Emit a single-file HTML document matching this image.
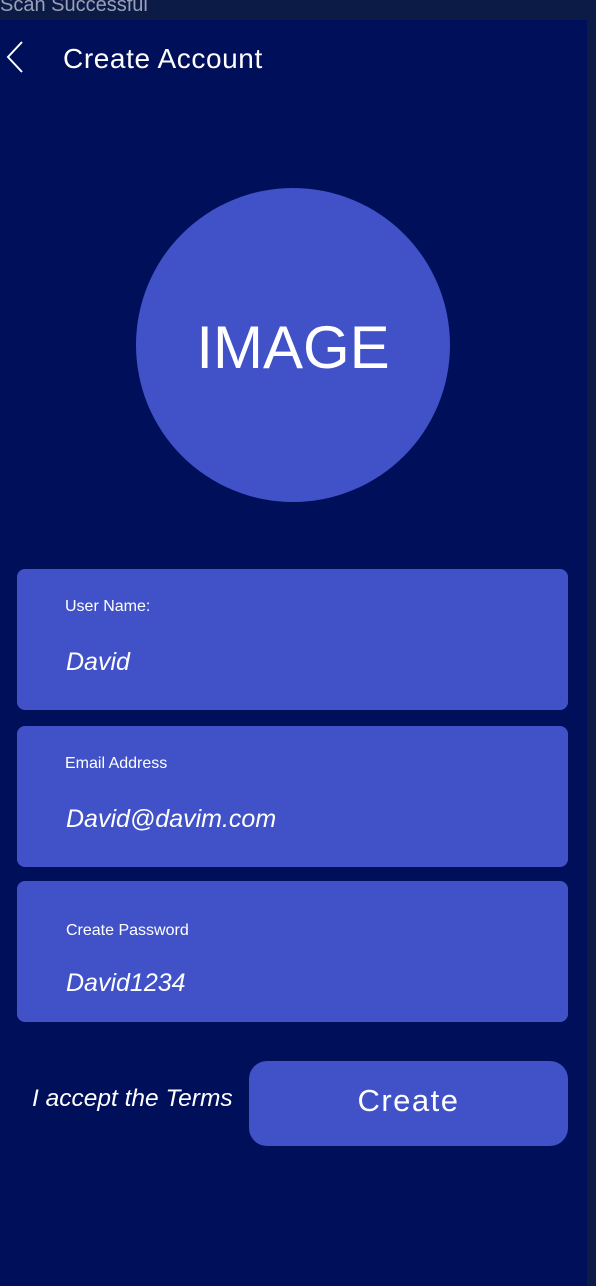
<!DOCTYPE html>
<html><head><meta charset="utf-8"><style>
html,body{margin:0;padding:0}
body{width:596px;height:1286px;background:#0c1a46;position:relative;overflow:hidden;font-family:"Liberation Sans",sans-serif;color:#fff}
.top{position:absolute;left:0;top:0;width:596px;height:20px;background:#0c1a46}
.top span{position:absolute;left:0;top:-6px;font-size:20px;color:#9aa0b8}
.main{position:absolute;left:0;top:20px;width:587px;height:1266px;background:#000f5a}
.title{position:absolute;left:63px;top:43px;font-size:28px;letter-spacing:0.6px}
.circle{position:absolute;left:136px;top:188px;width:314px;height:314px;border-radius:50%;background:#4152c8}
.circle span{position:absolute;left:0;right:0;top:120px;text-align:center;font-size:60px;line-height:80px;letter-spacing:0px}
.card{position:absolute;left:17px;width:551px;height:141px;background:#4152c8;border-radius:8px}
.lbl{position:absolute;left:48px;font-size:16px}
.val{position:absolute;left:49px;font-size:25px;font-style:italic}
.terms{position:absolute;left:32px;top:1085px;font-size:24.5px;font-style:italic}
.btn{position:absolute;left:249px;top:1061px;width:319px;height:85px;background:#4152c8;border-radius:18px;text-align:center;font-size:31px;line-height:80px;letter-spacing:1.5px}
</style></head><body>
<div class="top"><span>Scan Successful</span></div>
<div class="main"></div>
<svg style="position:absolute;left:0;top:38px" width="30" height="40"><path d="M22 4 L8 19 L22 34" stroke="#fff" stroke-width="2" fill="none"/></svg>
<div class="title">Create Account</div>
<div class="circle"><span>IMAGE</span></div>
<div class="card" style="top:569px"><div class="lbl" style="top:29px">User Name:</div><div class="val" style="top:79px">David</div></div>
<div class="card" style="top:726px"><div class="lbl" style="top:29px">Email Address</div><div class="val" style="top:79px">David@davim.com</div></div>
<div class="card" style="top:881px"><div class="lbl" style="top:41px;left:49px">Create Password</div><div class="val" style="top:88px">David1234</div></div>
<div class="terms">I accept the Terms</div>
<div class="btn">Create</div>
</body></html>
